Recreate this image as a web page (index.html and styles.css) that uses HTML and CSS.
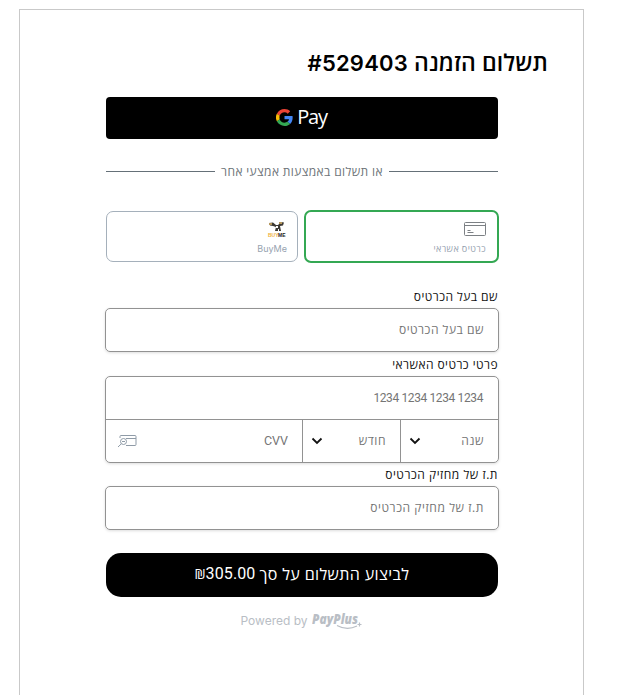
FILE: index.html
```html
<!DOCTYPE html>
<html lang="he" dir="rtl">
<head>
<meta charset="utf-8">
<title>תשלום הזמנה</title>
<link rel="stylesheet" href="styles.css">
</head>
<body>
<main class="frame">
  <h1 class="title"><span class="title-text">תשלום הזמנה</span> <span class="order" dir="ltr">#529403</span></h1>
  <div class="content">
    <button class="gpay" dir="ltr">
      <svg class="g-logo" viewBox="0 0 48 48"><path fill="#ea4335" d="M24 9.500c3.500 0 6.700 1.200 9.200 3.600l6.900-6.900C35.900 2.400 30.500 0 24 0 14.600 0 6.500 5.400 2.600 13.200l8 6.200C12.400 13.700 17.700 9.500 24 9.500z"/><path fill="#4285f4" d="M47 24.500c0-1.600-.2-3.100-.4-4.500H24v9h12.900c-.6 3-2.200 5.500-4.700 7.200l7.700 6C44.400 38 47 31.800 47 24.500z"/><path fill="#fbbc05" d="M10.500 28.600a14.500 14.500 0 0 1 0-9.200l-8-6.200a24 24 0 0 0 0 21.600z"/><path fill="#34a853" d="M24 48c6.500 0 11.900-2.100 15.900-5.800l-7.700-6c-2.200 1.500-4.900 2.300-8.200 2.300-6.300 0-11.600-4.200-13.500-9.900l-8 6.200C6.500 42.600 14.600 48 24 48z"/></svg>
      <span class="pay">Pay</span>
    </button>
    <div class="divider"><span class="divider-text">או תשלום באמצעות אמצעי אחר</span></div>
    <div class="methods">
      <div class="method selected">
        <svg class="method-card" viewBox="0 0 22 14" fill="none" stroke="#7c8084"><rect x=".5" y=".5" width="21" height="13" rx="1"/><path d="M1 3.500h20M3.500 8.500h3M3.500 10.500h6"/></svg>
        <span class="method-name">כרטיס אשראי</span>
      </div>
      <div class="method">
        <svg class="method-buyme" viewBox="0 0 20 16"><path fill="#3c3934" d="M2 2l4-.5 3 2.500h2l3-3 3 .5-1 3-3 .5 1 5H8l1-4-3-1-3-.5z"/><path fill="#b5975c" d="M2 2h3v2H2zM12 1h3v2h-3z"/><path fill="#fff" d="M9 5h2v2H9zM11 8h1v2h-1z"/><text x="1" y="15.500" class="logo-buy">BUY</text><text x="11" y="15.500" class="logo-me">ME</text></svg>
        <span class="method-name buyme-name">BuyMe</span>
      </div>
    </div>
    <form class="form">
      <label class="label l1">שם בעל הכרטיס</label>
      <div class="field"><span class="hint">שם בעל הכרטיס</span></div>
      <label class="label l2">פרטי כרטיס האשראי</label>
      <div class="group">
        <div class="row number"><span class="digits">1234 1234 1234 1234</span></div>
        <div class="row split">
          <div class="cell year"><span class="hint">שנה</span><svg class="chevron" viewBox="0 0 12 8"><path d="M1.500 1.500L6 6l4.500-4.500"/></svg></div>
          <div class="cell month"><span class="hint">חודש</span><svg class="chevron" viewBox="0 0 12 8"><path d="M1.500 1.500L6 6l4.500-4.500"/></svg></div>
          <div class="cell cvv"><span class="cvv-text">CVV</span><svg class="cvv-icon" viewBox="0 0 20 14" fill="none" stroke="#8f9ba7"><path d="M3 4V2.500q0-1 1-1h14q1 0 1 1v8q0 1-1 1H9M9 4.500h10"/><circle cx="6.500" cy="7.500" r="3"/><path d="M4.300 9.800L1 13M5 7.500h3"/></svg></div>
        </div>
      </div>
      <label class="label l3">ת.ז של מחזיק הכרטיס</label>
      <div class="field"><span class="hint id-hint">ת.ז של מחזיק הכרטיס</span></div>
      <button class="submit" type="button"><span class="submit-text">לביצוע התשלום על סך</span><span class="price">305.00</span><span class="shekel">₪</span></button>
    </form>
    <footer class="powered" dir="ltr"><span class="by">Powered by</span><svg class="payplus" viewBox="0 0 52 20"><text x="0" y="14" textLength="46" lengthAdjust="spacingAndGlyphs">PayPlus</text><path d="M25 15.500Q35 21 45 16M45.500 14.500h4M47.500 12.500v4"/></svg></footer>
  </div>
</main>
</body>
</html>
```
FILE: styles.css
```css
* { box-sizing: border-box; }
body { margin: 0; height: 695px; overflow: hidden; background: #fff; font-family: "Open Sans", "Noto Sans", sans-serif; }
.frame { direction: rtl; width: 565px; height: 710px; margin: 9px auto 0 19px; border: 1px solid #c9c9c9; padding: 37px 35px 0; }
.title { margin: 0; height: 31px; line-height: 31px; font-size: 23px; font-weight: 600; color: #000; white-space: nowrap; }
.title-text { letter-spacing: .1px; }
.order { display: inline-block; font: 600 22px/30px Inter, sans-serif; letter-spacing: .2px; }
.content { width: 392px; margin: 19px 50px 0 auto; }
.gpay { display: flex; align-items: center; justify-content: center; gap: 4px; width: 392px; height: 42px; padding: 0 1px 2px 0; border: 0; border-radius: 4px; background: #000; color: #fff; }
.g-logo { width: 17px; height: 17px; }
.pay { font: 400 20px/24px "Open Sans", sans-serif; letter-spacing: -1.2px; }
.divider { display: flex; align-items: center; gap: 6px; height: 20px; margin-top: 22px; font-size: 12px; letter-spacing: .38px; color: #6d7378; white-space: nowrap; }
.divider::before, .divider::after { content: ""; flex: 1; height: 1px; background: #657078; }
.methods { display: flex; gap: 6px; width: 393px; margin: 29px -1px 0 0; }
.method { display: flex; flex-direction: column; align-items: flex-start; width: 192px; height: 51px; margin-top: 1px; padding: 9px 10px 0; border: 1px solid #a5b0bb; border-radius: 7px; }
.selected { width: 195px; height: 53px; margin-top: 0; padding: 10px 11px 0; border: 2px solid #34a853; }
.method-card { width: 22px; height: 14px; }
.method-buyme { width: 20px; height: 16px; }
.logo-buy, .logo-me { font: 700 5px "Liberation Sans", sans-serif; direction: ltr; fill: #f0b23c; text-anchor: start; }
.logo-me { fill: #222; }
.method-name { margin-top: 7px; font-size: 9px; line-height: 12px; letter-spacing: .42px; color: #96a2af; }
.buyme-name { margin-top: 6px; font-family: Inter, sans-serif; letter-spacing: 0; }
.form { width: 394px; margin: 24px -1px 0 0; }
.label { display: block; height: 20px; margin-right: 1px; font-size: 12px; line-height: 20px; letter-spacing: .45px; color: #111; }
.l3 { letter-spacing: .53px; }
.field { height: 44px; margin: 1px 0 3px; padding: 0 14px 2px; display: flex; align-items: center; border: 1px solid #929292; border-radius: 5px; box-shadow: 0 1px 3px #0002; font-size: 12px; color: #757575; }
.hint { letter-spacing: .52px; }
.id-hint { letter-spacing: .58px; }
.group { height: 87px; margin: 1px 0 2px; border: 1px solid #929292; border-radius: 5px; box-shadow: 0 1px 3px #0002; font-size: 12px; color: #757575; }
.row { display: flex; }
.number { height: 42px; align-items: center; padding: 0 15px; }
.digits { direction: ltr; font-family: Roboto, sans-serif; letter-spacing: -.38px; }
.split { height: 43px; border-top: 1px solid #929292; }
.cell { display: flex; align-items: center; justify-content: space-between; padding: 0 14px 1px 8px; border-left: 1px solid #929292; }
.year, .month { width: 98px; }
.cvv { flex: 1; padding-left: 11px; border: 0; }
.chevron { width: 12px; height: 8px; fill: none; stroke: #111; stroke-width: 1.8; }
.cvv-icon { width: 20px; height: 14px; }
.cvv-text { font: 400 12.500px Roboto, sans-serif; }
.submit { display: flex; align-items: center; justify-content: center; width: 392px; height: 44px; margin: 23px 1px 0 0; padding: 0 0 3px; border: 0; border-radius: 15px; background: #000; color: #fff; font: 500 16px "Open Sans", sans-serif; white-space: nowrap; }
.submit-text { letter-spacing: .38px; }
.price { margin-right: 4px; font: 400 16px Roboto, sans-serif; letter-spacing: .1px; }
.shekel { font-size: 14px; }
.powered { display: flex; align-items: center; justify-content: center; height: 20px; margin-top: 13px; gap: 4px; color: #b9bec5; }
.by { font: 400 12px Inter, sans-serif; }
.payplus { width: 52px; height: 20px; fill: #b9bec5; }
.payplus text { font: italic 800 13.500px "Open Sans", sans-serif; }
.payplus path { fill: none; stroke: #b9bec5; stroke-width: 1.200; }
```
